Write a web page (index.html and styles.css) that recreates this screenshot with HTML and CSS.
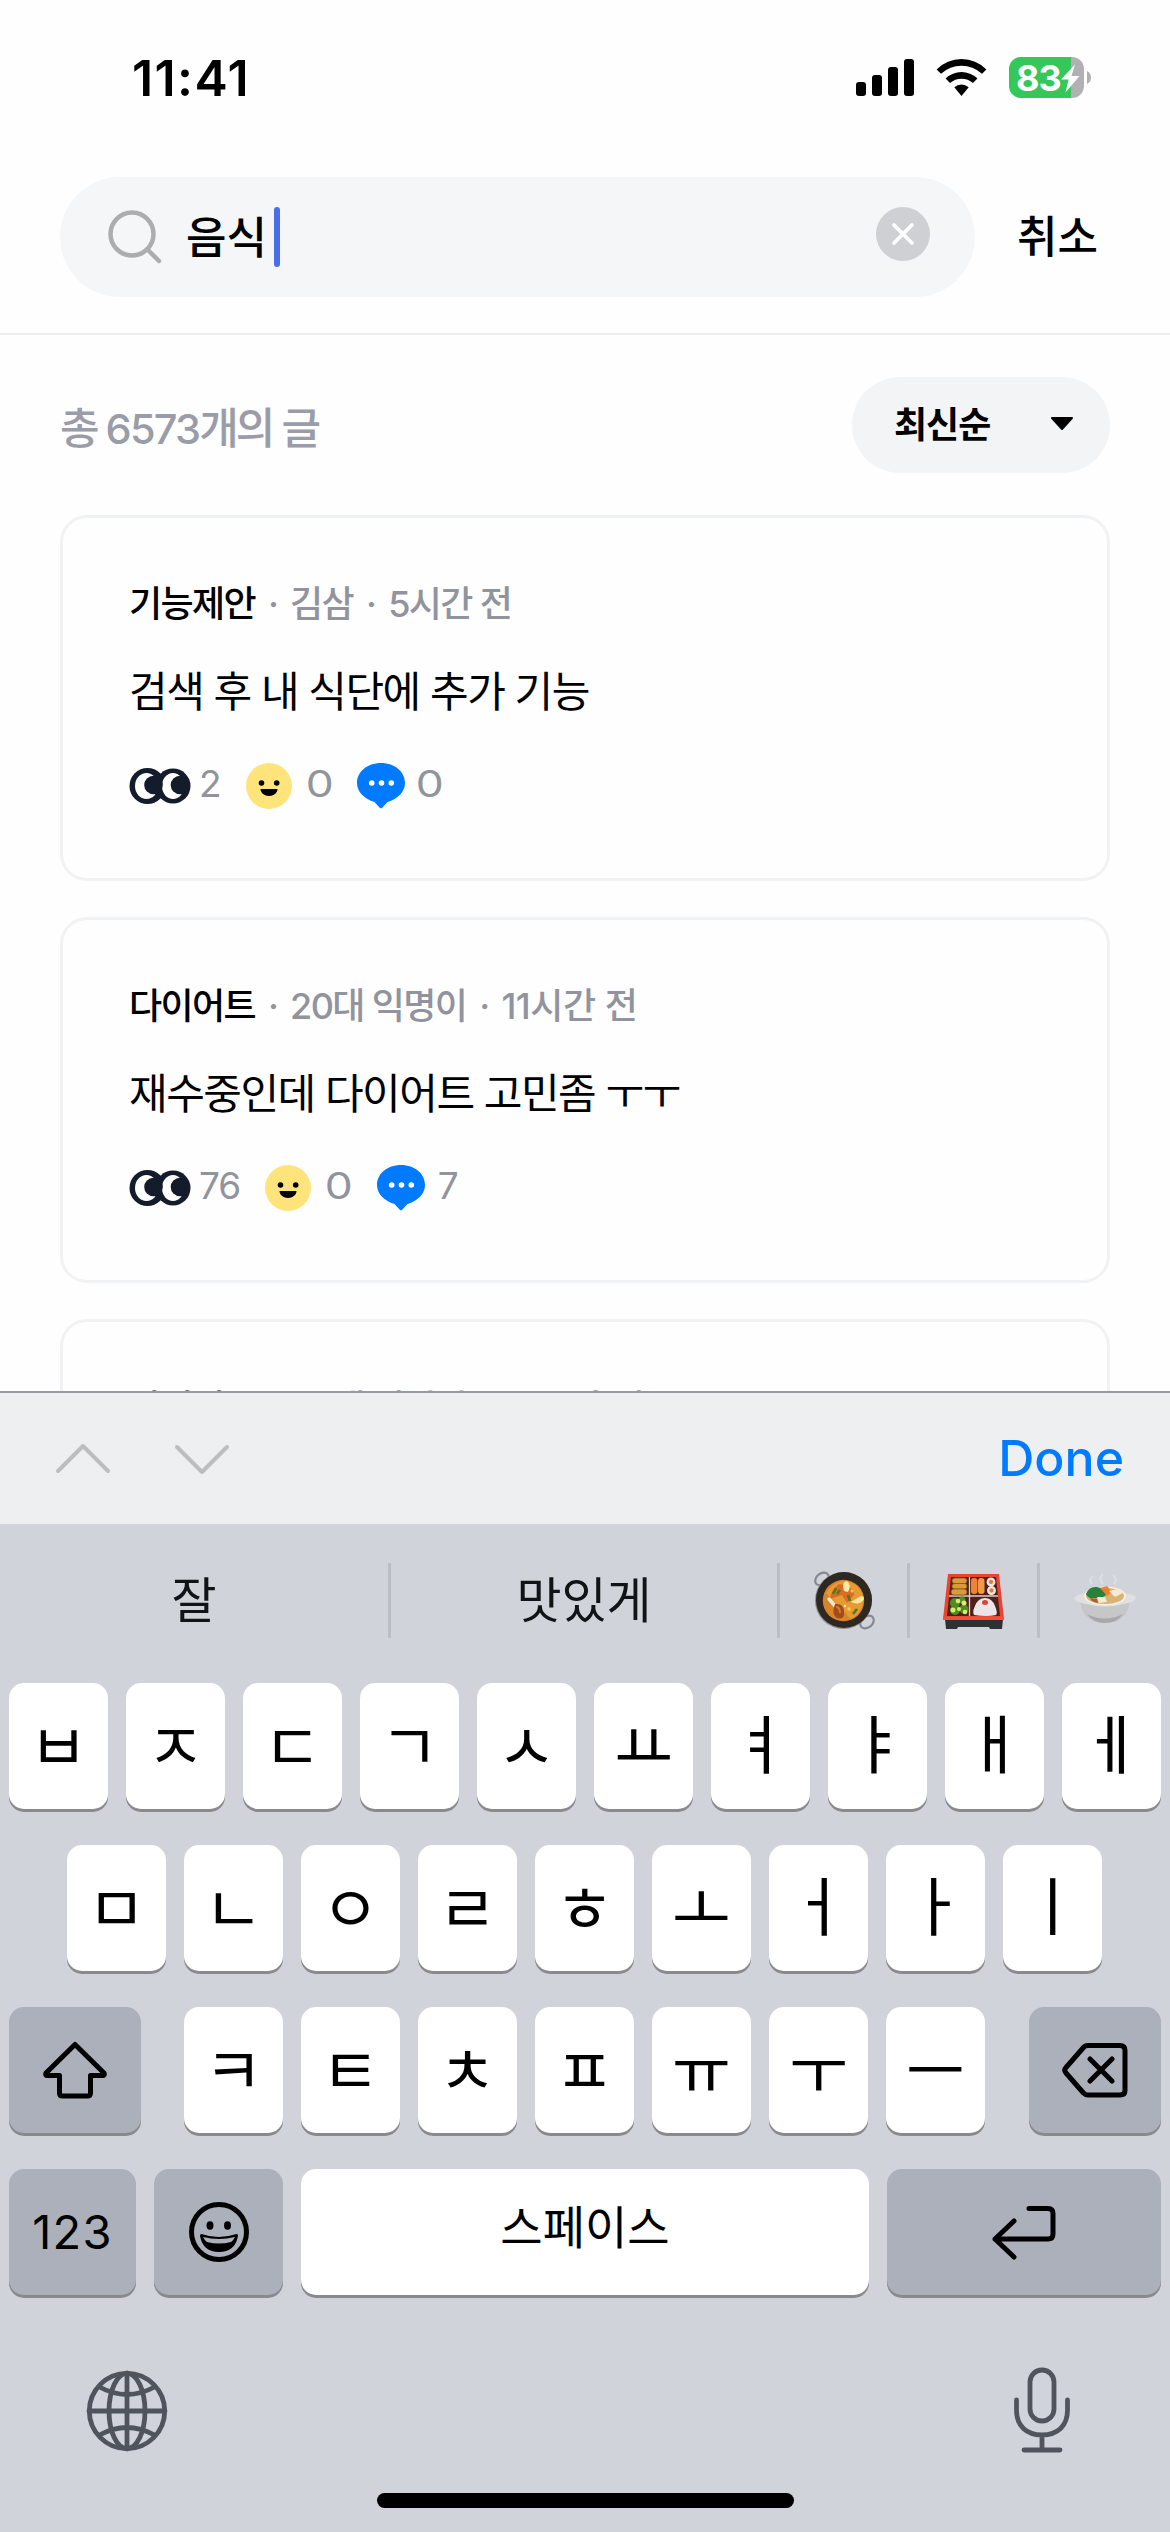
FILE: index.html
```html
<!DOCTYPE html>
<html lang="ko">
<head>
<meta charset="utf-8">
<title>검색</title>
<link rel="stylesheet" href="styles.css">
</head>
<body>
<svg class="defs" aria-hidden="true">
  <symbol id="eyes" viewBox="0 0 63 38">
    <circle cx="19.500" cy="19" r="18" fill="#141c2c"/><circle cx="45" cy="19" r="17.500" fill="#141c2c"/>
    <ellipse cx="18.500" cy="19" rx="11.500" ry="13" fill="#fff"/><ellipse cx="45" cy="19" rx="11" ry="13" fill="#fff"/>
    <circle cx="25.500" cy="18" r="9.300" fill="#141c2c"/><circle cx="52" cy="18" r="9.300" fill="#141c2c"/>
  </symbol>
  <symbol id="smile" viewBox="0 0 46 46">
    <circle cx="23" cy="23" r="23" fill="#ffe47b"/><circle cx="15.500" cy="20" r="2.800"/><circle cx="30.700" cy="20" r="2.800"/>
    <path d="M14.500 26h17c0 4-4 7-8.500 7s-8.500-3-8.500-7z"/>
  </symbol>
  <symbol id="bubble" viewBox="0 0 48 46">
    <path d="M24 0C38 0 48 9 48 20c0 9-7.500 16-17.500 19l-5.300 5.800q-1.200 1-2.400 0L17.500 39C7.500 36 0 29 0 20 0 9 10 0 24 0z" fill="#007aff"/>
    <circle cx="14.700" cy="20" r="2.800" fill="#fff"/><circle cx="24.500" cy="20" r="2.800" fill="#fff"/><circle cx="34.300" cy="20" r="2.800" fill="#fff"/>
  </symbol>
</svg>
<div class="screen">
  <div class="status-bar">
    <span class="time">11:41</span>
    <div class="status-icons">
      <svg width="58" height="41" viewBox="0 0 58 41"><rect y="25" width="10" height="14" rx="3"/><rect x="16" y="18" width="10" height="21" rx="3"/><rect x="32" y="10" width="10" height="29" rx="3"/><rect x="48" y="2" width="10" height="37" rx="3"/></svg>
      <svg width="51" height="41" viewBox="0 0 51 41"><path d="M.6 12.500Q11 2 25.500 2t24.900 10.500l-4.400 4.300Q37 8.800 25.500 8.800T5 16.800z"/><path d="M9.600 21.500Q16.500 15 25.500 15t15.900 6.500L37 26q-5-4.300-11.500-4.300T14 26z"/><path d="M18.300 30.200q3.200-2.700 7.200-2.700t7.200 2.700L25.500 39z"/></svg>
      <svg width="82" height="41" viewBox="0 0 82 41">
        <path d="M62 0h1a12 12 0 0 1 12 12v17a12 12 0 0 1-12 12h-1z" fill="#b1b1b3"/><path d="M12 0h50v41H12A12 12 0 0 1 0 29V12A12 12 0 0 1 12 0z" fill="#34c759"/>
        <path d="M78 14q4 2 4 6.500T78 27z" fill="#b1b1b3"/>
        <text class="battery-text" x="7" y="34">83</text>
        <path d="M66 7.500 52 22.500h7.600L56.500 35.500 70.500 19h-8z" fill="#fff"/>
      </svg>
    </div>
  </div>

  <header class="search-bar">
    <div class="search-field">
      <svg class="search-icon" width="54" height="54" viewBox="0 0 54 54"><circle cx="24" cy="24" r="21.500"/><path d="M39.500 39.500 51 51"/></svg>
      <span class="query">음식</span><span class="caret"></span>
      <svg class="clear" width="54" height="54" viewBox="0 0 54 54"><circle cx="27" cy="27" r="27" fill="#cfd0d4"/><path d="m18 18 18 18m0-18L18 36" stroke="#fff" stroke-width="3.800" stroke-linecap="round"/></svg>
    </div>
    <span class="cancel">취소</span>
  </header>

  <main class="results">
    <div class="summary">
      <p class="total">총 <span class="num">6573</span>개의 글</p>
      <div class="sort"><span>최신순</span><svg width="24" height="14" viewBox="0 0 24 14"><path d="M2 1h20L12 12z" stroke="#000" stroke-width="2" stroke-linejoin="round"/></svg></div>
    </div>
    <article class="card">
      <p class="meta"><b>기능제안</b><i>·</i><span>김삼</span><i>·</i><span>5시간 전</span></p>
      <h2>검색 후 내 식단에 추가 기능</h2>
      <div class="stats">
        <svg class="eyes"><use href="#eyes"/></svg><span>2</span>
        <svg class="smile"><use href="#smile"/></svg><span class="zero">0</span>
        <svg class="bubble"><use href="#bubble"/></svg><span class="zero">0</span>
      </div>
    </article>
    <article class="card">
      <p class="meta"><b>다이어트</b><i>·</i><span>20대 익명이</span><i>·</i><span class="wide-time">11시간 전</span></p>
      <h2>재수중인데 다이어트 고민좀 ㅜㅜ</h2>
      <div class="stats">
        <svg class="eyes"><use href="#eyes"/></svg><span>76</span>
        <svg class="smile"><use href="#smile"/></svg><span class="zero">0</span>
        <svg class="bubble"><use href="#bubble"/></svg><span>7</span>
      </div>
    </article>
    <article class="card">
      <p class="meta"><b>다이어트</b><i>·</i><span>20대 익명이</span><i>·</i><span class="wide-time">12시간 전</span></p>
    </article>
  </main>

  <section class="keyboard">
    <div class="toolbar">
      <svg width="180" height="40" viewBox="0 0 180 40"><path d="M5 33 30 8 55 33M124 9l25 25L174 9"/></svg>
      <span class="done">Done</span>
    </div>
    <div class="suggestions">
      <span>잘</span><hr><span>맛있게</span><hr>
      <svg viewBox="0 0 64 64">
        <g fill="none" stroke="#85898e" stroke-width="2.200"><ellipse cx="10" cy="10" rx="7.500" ry="5.500" transform="rotate(-38 10 10)"/><ellipse cx="55" cy="53" rx="7.500" ry="5.500" transform="rotate(-38 55 53)"/></g>
        <circle cx="31.500" cy="31.500" r="28.500" fill="#8b8b8b"/><circle cx="32" cy="31" r="28" fill="#2e2823"/>
        <circle cx="31.500" cy="31.500" r="20.700" fill="#d9832a"/><path d="M14 24q8-13 20-12 15 3 17 17 1 14-12 21z" fill="#e89a32"/>
        <path d="M27 15q-8 6-9 15l12-4 5 8 7-8q0-9-15-11z" fill="#d96d25"/>
        <path d="M32 22q-3-9 3-10 5 4 1 11zM39 33q9 4 13-3 0-3-3-3z" fill="#ffe9a0"/>
        <path d="m21 25 3-6m12 7 2 6m3 13 4-5m-20-15 3-4" stroke="#58751f" stroke-width="2.600"/>
        <path d="m17 30 7 8" stroke="#f8ead0" stroke-width="3.500" stroke-linecap="round"/><path d="M23 35q9-1 9 8 1 8-7 6-6-4-2-14z" fill="#a24d17"/><path d="M24 38q4 0 4 6" stroke="#cf7d3a" stroke-width="2" fill="none"/>
        <circle cx="40" cy="22" r="1.500" fill="#f7c85b"/><circle cx="37" cy="40" r="1.800" fill="#f7c85b"/><circle cx="33" cy="37" r="1.200" fill="#fff0b5"/>
      </svg><hr>
      <svg viewBox="0 0 64 64">
        <path d="M3 50h58l-1 10h-12l-1-2H16l-1 2H4z" fill="#2c3134"/><path d="M6 5h51l5 45H1z" fill="#e8442e"/><path d="M9 8h45l4 39H5z" fill="#51201c"/>
        <path d="M27.500 8v39M7 27h49" stroke="#d6cfcc" stroke-width="1.300"/>
        <g fill="#d89d3a" stroke="#885319" stroke-width=".8"><rect x="10" y="9" width="15" height="5.500" rx="2.700"/><rect x="10" y="14.500" width="15" height="5.500" rx="2.700"/><rect x="9" y="20" width="16" height="6" rx="3"/></g>
        <rect x="29" y="9" width="6.500" height="16" rx="3" fill="#ec8633"/><rect x="36" y="9" width="6.500" height="16" rx="3" fill="#f19a43"/>
        <g fill="#e87946" stroke="#f1eadc" stroke-width="2.300"><circle cx="49" cy="13" r="3.300"/><circle cx="49.500" cy="21.500" r="3.300"/></g>
        <g fill="#4d8d24"><circle cx="13" cy="34" r="5"/><circle cx="20" cy="31" r="3.500"/><circle cx="13" cy="41" r="5"/><circle cx="22" cy="40" r="4.500"/></g>
        <g fill="#d8ec70"><circle cx="16" cy="32" r="2.300"/><circle cx="22" cy="34" r="2.500"/><circle cx="11" cy="41" r="2.500"/><circle cx="17" cy="40" r="2"/><circle cx="23" cy="43" r="2.300"/></g>
        <path d="M32 46q-2-3 1-9 3-8 10-8t10 8q3 7 1 9-9 2-22 0z" fill="#e9e5e8"/><ellipse cx="43" cy="33.500" rx="3" ry="2.500" fill="#e2412f"/>
        <path d="M1 47.500h61v3.500H1z" fill="#f14f36"/>
      </svg><hr>
      <svg viewBox="0 0 64 64">
        <path d="M19 15q-4-5 1-8m10 8q-5-5 0-10m11 10q4-5-1-9" fill="none" stroke="#dcdfe4" stroke-width="2"/>
        <path d="M7 31h50q-2 23-25 23T7 31z" fill="#c5c7c8"/><path d="M14 45q18 9 36 0-6 9-18 9-12 0-18-9z" fill="#a6a8aa"/>
        <path d="M1 29q4-4 12-5h38q8 1 12 4-1 5-8 6Q32 41 9 34q-7-1-8-5z" fill="#dfe0e0"/>
        <ellipse cx="32" cy="27" rx="21" ry="9.500" fill="#f2f0e7"/><ellipse cx="32" cy="27" rx="19" ry="8" fill="#d9b274"/>
        <path d="M13 25q3-8 11-7 8 1 9 8-5 4-12 3-6 1-8-4z" fill="#27813a"/><path d="m27 19 7-2 5 6-5 4z" fill="#e98334"/><path d="m36 22 9-2 5 4-8 4zM24 28l8 0 2 5-8 1z" fill="#f5ead3"/><path d="m17 29 7 1 1 4q-7-1-8-5z" fill="#a76035"/>
      </svg>
    </div>
    <div class="keys">
      <div class="row">
        <kbd>ㅂ</kbd><kbd>ㅈ</kbd><kbd>ㄷ</kbd><kbd>ㄱ</kbd><kbd>ㅅ</kbd><kbd>ㅛ</kbd><kbd class="tall">ㅕ</kbd><kbd class="tall">ㅑ</kbd><kbd class="tall">ㅐ</kbd><kbd class="tall">ㅔ</kbd>
      </div>
      <div class="row second">
        <kbd>ㅁ</kbd><kbd>ㄴ</kbd><kbd>ㅇ</kbd><kbd>ㄹ</kbd><kbd>ㅎ</kbd><kbd>ㅗ</kbd><kbd class="tall">ㅓ</kbd><kbd class="tall">ㅏ</kbd><kbd class="tall">ㅣ</kbd>
      </div>
      <div class="row spread">
        <kbd class="fn wide"><svg width="66" height="58" viewBox="0 0 66 58"><path d="M33 3.500 62 32q1 2.500-1.500 2.500H48.500V52q0 3-3 3h-25q-3 0-3-3V34.500H5.500Q3 34.500 4 32z"/></svg></kbd>
        <div class="row letters">
          <kbd>ㅋ</kbd><kbd>ㅌ</kbd><kbd>ㅊ</kbd><kbd>ㅍ</kbd><kbd>ㅠ</kbd><kbd>ㅜ</kbd><kbd>ㅡ</kbd>
        </div>
        <kbd class="fn wide"><svg width="66" height="58" viewBox="0 0 66 58"><path d="M26 4.500h32q5 0 5 5v40q0 4.500-5 4.500H26q-2.500 0-4.500-2L4 32q-2.500-2.700 0-5.500L21.500 6.500Q23 4.500 26 4.500zM28 18l22 22m0-22L28 40"/></svg></kbd>
      </div>
      <div class="row bottom">
        <kbd class="fn digits">123</kbd>
        <kbd class="fn"><svg width="62" height="62" viewBox="0 0 62 62"><circle cx="31" cy="31" r="27.500"/><g class="solid"><ellipse cx="22" cy="24.500" rx="3.500" ry="4.200"/><ellipse cx="39.500" cy="24.500" rx="3.500" ry="4.200"/><path fill-rule="evenodd" d="M13.500 33q-2-1 0 0 17 6 35 0 2 0 1.500 2-3 16-19 16T12 35q0-2 1.500-2zM15 36q2 4 4 5 12 3 24 0 2-1 4-5-16 4-32 0z"/></g></svg></kbd>
        <kbd class="space">스페이스</kbd>
        <kbd class="fn"><svg width="66" height="58" viewBox="0 0 66 58"><path d="M38 5.500h19q5 0 5 5V31q0 5-5 5H4m19-18L4 36l19 18"/></svg></kbd>
      </div>
    </div>
    <div class="dock">
      <svg width="82" height="86" viewBox="0 0 82 86"><g transform="translate(0 3)"><circle cx="41" cy="41" r="37.700"/><ellipse cx="41" cy="41" rx="18" ry="37.700"/><path d="M41 3v76M3 41h76M13.500 17q27.500 15 55 0m-55 48q27.500-15 55 0"/></g></svg>
      <svg width="60" height="86" viewBox="0 0 60 86"><rect x="18" y="3" width="24" height="51" rx="12"/><path d="M4.500 33v10c0 16 10 25 25.500 25s25.500-9 25.500-25V33M30 68v15M12 83h36"/></svg>
    </div>
    <div class="home-indicator"></div>
  </section>
</div>
</body>
</html>
```
FILE: styles.css
```css
* { box-sizing: border-box; margin: 0; padding: 0; }
body { background: #fff; color: #000; font-family: "Noto Sans CJK KR", sans-serif; }
.defs { position: absolute; width: 0; height: 0; }
svg { display: block; flex: none; }
.screen { width: 1170px; height: 2532px; display: flex; flex-direction: column; overflow: hidden; background: #fefefe; }

.status-bar { height: 177px; flex: none; display: flex; justify-content: space-between; padding: 48px 79px 0 132px; }
.time { font: 600 50px/60px Inter, sans-serif; letter-spacing: 1.4px; }
.status-icons { display: flex; gap: 22px; padding-top: 9px; }
.battery-text { font: 700 36px Inter, sans-serif; letter-spacing: -1px; fill: #fff; }

.search-bar { height: 158px; flex: none; display: flex; gap: 42px; padding-left: 60px; border-bottom: 2px solid #ecedef; }
.search-field { width: 915px; height: 120px; border-radius: 60px; background: #f4f6f8; display: flex; align-items: center; padding: 0 45px 0 48px; }
.search-icon { fill: none; stroke: #abadaf; stroke-width: 4.500; stroke-linecap: round; margin-right: 24px; }
.query, .cancel { font-size: 44px; line-height: 114px; height: 118px; font-weight: 500; }
.caret { width: 6px; height: 60px; border-radius: 3px; background: #4a6ee8; margin-left: 7px; }
.clear { margin-left: auto; margin-bottom: 6px; }

.results { flex: 1; min-height: 0; overflow: hidden; padding: 42px 60px 0; }
.summary { height: 96px; margin-bottom: 42px; display: flex; justify-content: space-between; align-items: center; }
.total { font-size: 43px; line-height: 60px; font-weight: 500; letter-spacing: -3px; color: #9a9ca8; }
.num { font: 500 41.500px/1 Inter, sans-serif; letter-spacing: -1.800px; }
.sort { width: 258px; height: 96px; border-radius: 48px; background: #f3f4f6; display: flex; align-items: center; justify-content: space-between; padding: 0 36px 6px 42px; font-size: 36px; line-height: 50px; font-weight: 700; letter-spacing: -1px; }
.sort svg { margin-top: 3px; }
.card { height: 366px; border: 3px solid #f1f2f3; border-radius: 27px; margin-bottom: 36px; padding: 61px 65px 0 66px; }
.meta { display: flex; font: 500 36px/50px Inter, "Noto Sans CJK KR", sans-serif; letter-spacing: -1.600px; color: #91949d; white-space: nowrap; }
.meta b { font-weight: 500; color: #000; }
.meta i { font-style: normal; width: 35px; text-align: center; }
.wide-time { letter-spacing: -.5px; }
.card h2 { font-size: 42px; line-height: 60px; font-weight: 400; letter-spacing: -1.500px; margin-top: 30px; }
.stats { display: flex; height: 46px; margin: 44px 0 0 -1px; font: 400 37px/41px Inter, sans-serif; color: #91949d; }
.stats span { letter-spacing: -1px; }
.eyes { width: 63px; height: 38px; margin: 4px 8px 0 0; }
.smile { width: 46px; height: 46px; margin: 0 16px 0 25px; }
.bubble { width: 48px; height: 46px; margin: 0 13px 0 27px; }
.zero { transform: scaleX(1.2); }

.keyboard { height: 1141px; flex: none; background: #d0d3da; }
.toolbar { height: 133px; background: #eeeff1; border-top: 2px solid #999b9f; display: flex; justify-content: space-between; align-items: center; padding: 0 46px 2px 53px; }
.toolbar svg { fill: none; stroke: #bcbdbf; stroke-width: 4; stroke-linecap: round; stroke-linejoin: round; }
.done { font: 500 50px/60px Inter, sans-serif; color: #007aff; }
.suggestions { height: 159px; padding-top: 39px; display: grid; grid-template-columns: 388px 3px 386px 3px 127px 3px 127px 3px 130px; }
.suggestions span { font-size: 49px; line-height: 68px; text-align: center; color: #111417; }
.suggestions hr { border: 0; height: 75px; background: #bbbec4; border-radius: 1px; }
.suggestions svg { width: 64px; height: 64px; margin: 6px auto 0; }
.keys { display: grid; gap: 36px; padding: 0 9px; }
.row { display: flex; gap: 18px; justify-content: center; }
.second { padding-right: 1px; }
.spread { justify-content: space-between; }
.letters { margin-right: 1px; }
.bottom { display: grid; grid-template-columns: 127px 129px 568px 274px; }
kbd { width: 99px; height: 126px; border-radius: 15px; background: #fff; box-shadow: 0 3px #898a8e; display: flex; align-items: center; justify-content: center; font: 400 64px/1 "Noto Sans CJK KR", sans-serif; padding-bottom: 9px; }
.tall { padding-bottom: 13px; }
.fn { background: #abb0bb; padding-bottom: 0; }
.wide { width: 132px; }
.bottom kbd { width: auto; }
.fn svg { fill: none; stroke: #000; stroke-width: 5; stroke-linecap: round; stroke-linejoin: round; }
.fn .solid { fill: #000; stroke: none; }
kbd.digits { font: 400 47px/60px Inter, sans-serif; letter-spacing: 1.200px; }
kbd.space { font-size: 46px; padding-bottom: 16px; }
.dock { display: flex; justify-content: space-between; padding: 72px 98px 0 86px; }
.dock svg { fill: none; stroke: #50555d; stroke-width: 4.800; stroke-linecap: round; }
.home-indicator { width: 417px; height: 15px; border-radius: 8px; background: #000; margin: 40px auto 0; }
```
